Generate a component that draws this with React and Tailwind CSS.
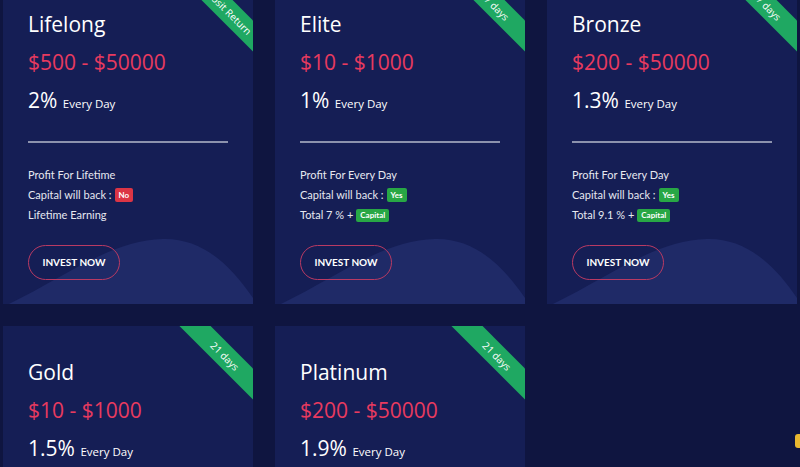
import React from 'react';

const plans = [
  {
    name: 'Lifelong',
    range: '$500 - $50000',
    rate: '2%',
    ribbon: 'Deposit Return',
    lines: ['Profit For Lifetime'],
    back: 'No',
    total: null,
    last: 'Lifetime Earning',
  },
  {
    name: 'Elite',
    range: '$10 - $1000',
    rate: '1%',
    ribbon: '7 days',
    lines: ['Profit For Every Day'],
    back: 'Yes',
    total: 'Total 7 % +',
  },
  {
    name: 'Bronze',
    range: '$200 - $50000',
    rate: '1.3%',
    ribbon: '7 days',
    lines: ['Profit For Every Day'],
    back: 'Yes',
    total: 'Total 9.1 % +',
  },
  {
    name: 'Gold',
    range: '$10 - $1000',
    rate: '1.5%',
    ribbon: '21 days',
    lines: ['Profit For Every Day'],
    back: 'Yes',
    total: 'Total 31.5 % +',
  },
  {
    name: 'Platinum',
    range: '$200 - $50000',
    rate: '1.9%',
    ribbon: '21 days',
    lines: ['Profit For Every Day'],
    back: 'Yes',
    total: 'Total 39.9 % +',
  },
];

const Wave = () => (
  <svg
    className="absolute bottom-0 left-0 w-[250px] h-[70px] pointer-events-none"
    viewBox="0 0 250 70"
    preserveAspectRatio="none"
  >
    <path
      d="M6 70 C 60 44, 108 6, 160 5 C 200 4, 228 32, 250 64 L 250 70 Z"
      fill="#1f2a67"
    />
  </svg>
);

const PlanCard = ({ plan }) => (
  <div className="relative overflow-hidden bg-[#151e55] h-[326px] w-[250px] pl-[25px] pt-[32px] flex flex-col">
    <Wave />

    {/* Corner ribbon */}
    <div className="absolute top-[19px] right-[-32px] w-[120px] h-[22px] rotate-45 bg-[#1fa862] flex items-center justify-center">
      <span className="text-white text-[10px] leading-none font-['Open_Sans',sans-serif]">
        {plan.ribbon}
      </span>
    </div>

    <div className="relative flex flex-col font-['Open_Sans',sans-serif]">
      <h3 className="text-white text-[21px] leading-[28px]">{plan.name}</h3>
      <p className="mt-[10px] text-[#e83a5f] text-[21px] leading-[28px]">{plan.range}</p>
      <p className="mt-[10px] text-white text-[21px] leading-[28px]">
        {plan.rate} <span className="text-[11.5px]">Every Day</span>
      </p>
      <div className="mt-[23px] h-[2px] w-[200px] bg-[#8c92ad]" />
    </div>

    <div className="relative mt-[22px] flex flex-col text-[11px] leading-[20px] text-[#e6e8f0] font-['Lato',sans-serif]">
      {plan.lines.map((l) => (
        <span key={l}>{l}</span>
      ))}
      <span className="flex items-center gap-[3px]">
        Capital will back :
        <span
          className={`px-[4px] rounded-[2px] text-[8px] leading-[14px] font-bold text-white ${
            plan.back === 'No' ? 'bg-[#dc3545]' : 'bg-[#28a745]'
          }`}
        >
          {plan.back}
        </span>
      </span>
      {plan.total ? (
        <span className="flex items-center gap-[3px]">
          {plan.total}
          <span className="px-[4px] rounded-[2px] text-[8px] leading-[13px] font-bold text-white bg-[#28a745]">
            Capital
          </span>
        </span>
      ) : (
        <span>{plan.last}</span>
      )}
    </div>

    <button className="relative mt-[20px] w-[92px] h-[35px] rounded-full border border-[#b93a63] text-white text-[10px] font-bold font-['Lato',sans-serif] flex items-center justify-center">
      INVEST NOW
    </button>
  </div>
);

export default function App() {
  return (
    <div className="relative h-[467px] w-[800px] overflow-hidden bg-[#0f1540]">
      <div className="-mt-[22px] pl-[3px] grid grid-cols-[250px_250px_250px] gap-[22px]">
        {plans.map((p) => (
          <PlanCard key={p.name} plan={p} />
        ))}
      </div>
      {/* partially hidden floating widget */}
      <div className="absolute right-[-5px] top-[434px] w-[10px] h-[14px] rounded-[3px] bg-[#e9b730]" />
    </div>
  );
}
